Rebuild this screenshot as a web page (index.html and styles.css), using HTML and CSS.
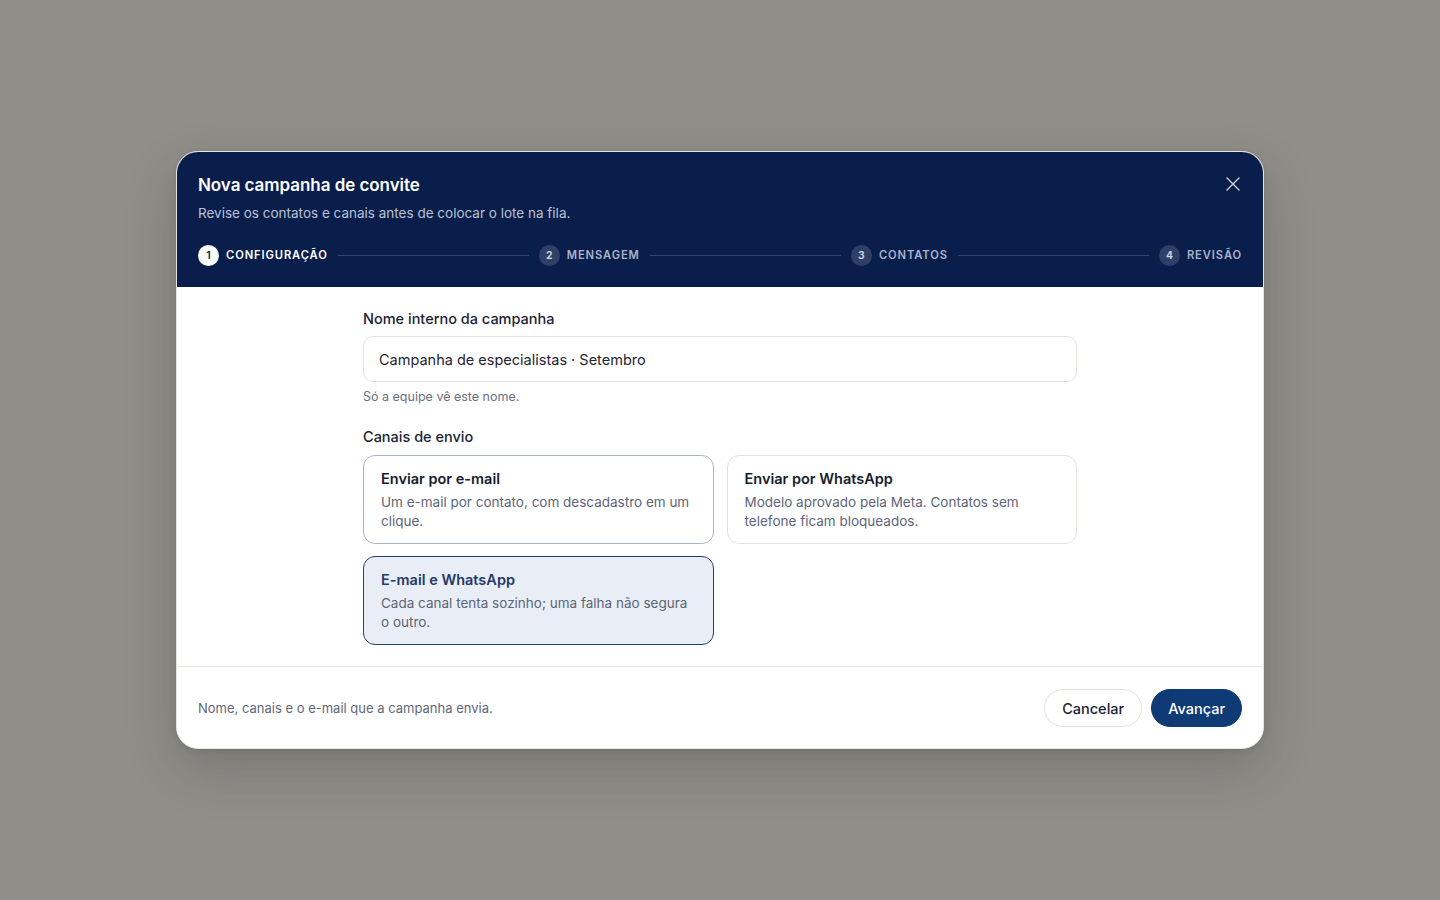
FILE: index.html
```html
<!DOCTYPE html>
<html lang="pt-BR">
<head>
<meta charset="utf-8">
<title>Nova campanha de convite</title>
<link rel="stylesheet" href="styles.css">
</head>
<body>
<div class="backdrop">
  <div class="modal">
    <header class="modal-head">
      <div class="head-top">
        <div>
          <h1 class="title">Nova campanha de convite</h1>
          <p class="subtitle">Revise os contatos e canais antes de colocar o lote na fila.</p>
        </div>
        <button class="close" aria-label="Fechar">
          <svg width="14" height="14" viewBox="0 0 14 14"><path d="M1 1L13 13M13 1L1 13" stroke="currentColor" stroke-width="1.4" stroke-linecap="round"/></svg>
        </button>
      </div>
      <ol class="stepper">
        <li class="step active"><span class="num">1</span><span class="lbl">Configuração</span></li>
        <li class="line"></li>
        <li class="step"><span class="num">2</span><span class="lbl">Mensagem</span></li>
        <li class="line"></li>
        <li class="step"><span class="num">3</span><span class="lbl">Contatos</span></li>
        <li class="line"></li>
        <li class="step"><span class="num">4</span><span class="lbl">Revisão</span></li>
      </ol>
    </header>
    <main class="modal-body">
      <div class="form">
        <label class="field-label">Nome interno da campanha</label>
        <div class="input">Campanha de especialistas · Setembro</div>
        <p class="help">Só a equipe vê este nome.</p>
        <p class="field-label section">Canais de envio</p>
        <div class="cards">
          <div class="card hover">
            <div class="card-title">Enviar por e-mail</div>
            <div class="card-desc">Um e-mail por contato, com descadastro em um clique.</div>
          </div>
          <div class="card">
            <div class="card-title">Enviar por WhatsApp</div>
            <div class="card-desc">Modelo aprovado pela Meta. Contatos sem telefone ficam bloqueados.</div>
          </div>
          <div class="card selected">
            <div class="card-title">E-mail e WhatsApp</div>
            <div class="card-desc">Cada canal tenta sozinho; uma falha não segura o outro.</div>
          </div>
        </div>
      </div>
    </main>
    <footer class="modal-foot">
      <p class="foot-note">Nome, canais e o e-mail que a campanha envia.</p>
      <div class="actions">
        <button class="btn ghost">Cancelar</button>
        <button class="btn primary">Avançar</button>
      </div>
    </footer>
  </div>
</div>
</body>
</html>
```
FILE: styles.css
```css
* { box-sizing: border-box; }
html, body { margin: 0; padding: 0; }
body {
  background: #8f8e89;
  font-family: Inter, "Noto Sans", "Liberation Sans", sans-serif;
  color: #1b2236;
  width: 1440px;
  height: 900px;
}
.backdrop {
  height: 900px;
  display: flex;
  align-items: flex-start;
  justify-content: center;
  padding-top: 151px;
}
.modal {
  width: 1088px;
  background: #fff;
  border-radius: 22px;
  overflow: hidden;
  border: 1px solid #e6e5e1;
  box-shadow: 0 20px 50px rgba(40, 40, 36, 0.22), 0 2px 6px rgba(40, 40, 36, 0.12);
}
.modal-head {
  background: #0a1e4b;
  padding: 22px 21px 22px 21px;
}
.head-top {
  display: flex;
  justify-content: space-between;
  align-items: flex-start;
}
.title {
  margin: 0;
  font-size: 17px;
  line-height: 22px;
  font-weight: 600;
  color: #fff;
  letter-spacing: -0.05px;
}
.subtitle {
  margin: 7px 0 0;
  font-size: 13.5px;
  line-height: 20px;
  color: #b9c2d6;
}
.close {
  background: none;
  border: 0;
  padding: 0;
  margin: 3px 2px 0 0;
  width: 14px;
  height: 14px;
  color: #c9d0de;
  cursor: pointer;
  display: flex;
}
.stepper {
  list-style: none;
  margin: 22px 0 0;
  padding: 0;
  display: flex;
  align-items: center;
  height: 20px;
}
.step {
  display: flex;
  align-items: center;
  gap: 7px;
}
.num {
  width: 21px;
  height: 21px;
  border-radius: 50%;
  background: #2f4068;
  color: #d3d9e6;
  font-size: 10.5px;
  font-weight: 600;
  display: flex;
  align-items: center;
  justify-content: center;
}
.lbl {
  text-transform: uppercase;
  font-size: 11.2px;
  font-weight: 600;
  letter-spacing: 0.9px;
  color: #aab3c8;
}
.step.active .num { background: #fff; color: #0a1e4b; }
.step.active .lbl { color: #fff; }
.line {
  flex: 1;
  height: 1px;
  background: #34466e;
  margin: 0 10px;
}
.modal-body {
  padding: 22px 0 21px;
  border-bottom: 1px solid #e7e6e2;
}
.form {
  width: 714px;
  margin: 0 auto;
}
.field-label {
  display: block;
  margin: 0;
  font-size: 14.5px;
  line-height: 20px;
  font-weight: 500;
  color: #1b2236;
}
.field-label.section { margin-top: 22px; }
.input {
  margin-top: 7px;
  height: 46px;
  border: 1px solid #e4e2dd;
  border-radius: 10px;
  padding: 0 15px;
  display: flex;
  align-items: center;
  font-size: 14.5px;
  color: #1f2433;
}
.help {
  margin: 7px 0 0;
  font-size: 12.5px;
  line-height: 16px;
  color: #6b7080;
}
.cards {
  margin-top: 8px;
  display: grid;
  grid-template-columns: 1fr 1fr;
  gap: 12px 13px;
}
.card {
  border: 1px solid #e4e2dd;
  border-radius: 12px;
  padding: 13px 17px 12px;
  min-height: 89px;
  background: #fff;
}
.card.hover { border-color: #a9b5c9; }
.card.selected {
  background: #e9eef6;
  border-color: #23406e;
}
.card-title {
  font-size: 14.5px;
  line-height: 20px;
  font-weight: 600;
  color: #161d30;
}
.card.selected .card-title { color: #1f3b68; }
.card-desc {
  margin-top: 4px;
  font-size: 13.5px;
  line-height: 19px;
  color: #5d6578;
}
.modal-foot {
  display: flex;
  align-items: center;
  justify-content: space-between;
  padding: 22px 21px 21px;
}
.foot-note {
  margin: 0;
  font-size: 13px;
  color: #626879;
}
.actions {
  display: flex;
  gap: 9px;
}
.btn {
  height: 38px;
  border-radius: 19px;
  font-family: inherit;
  font-size: 14.5px;
  font-weight: 500;
  cursor: pointer;
}
.btn.ghost {
  padding: 0 17px;
  background: #fff;
  border: 1px solid #e4e2dd;
  color: #1b2236;
}
.btn.primary {
  padding: 0 16px;
  background: #0e3a75;
  border: 1px solid #0e3a75;
  color: #fff;
}
```
